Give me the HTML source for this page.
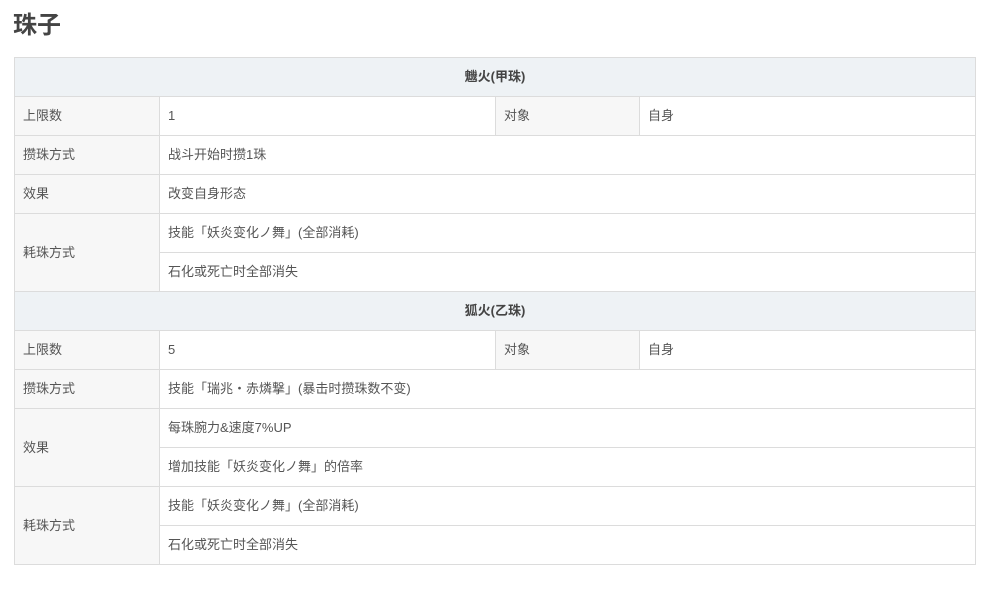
<!DOCTYPE html>
<html><head><meta charset="utf-8"><style>
body{margin:0;background:#fff;font-family:"Liberation Sans","Noto Sans CJK SC",sans-serif;color:#444;width:1000px;height:590px;overflow:hidden;position:relative}
h1{position:absolute;left:13px;top:9px;margin:0;font-size:24px;font-weight:bold;color:#444;line-height:34px}
.c{position:absolute;box-sizing:border-box;border:1px solid #dcdcdc;font-size:13px;line-height:37px;padding-left:8px;background:#fff;color:#555}
.l{background:#f7f7f7}
.h{background:#eef2f5;text-align:center;font-weight:bold;padding-left:0;color:#444}
</style></head><body>
<h1>珠子</h1>
<div class="c h" style="left:14px;top:57px;width:962px;height:40px">魕火(甲珠)</div>
<div class="c l" style="left:14px;top:96px;width:146px;height:40px">上限数</div>
<div class="c" style="left:159px;top:96px;width:337px;height:40px">1</div>
<div class="c l" style="left:495px;top:96px;width:145px;height:40px">对象</div>
<div class="c" style="left:639px;top:96px;width:337px;height:40px">自身</div>
<div class="c l" style="left:14px;top:135px;width:146px;height:40px">攒珠方式</div>
<div class="c" style="left:159px;top:135px;width:817px;height:40px">战斗开始时攒1珠</div>
<div class="c l" style="left:14px;top:174px;width:146px;height:40px">效果</div>
<div class="c" style="left:159px;top:174px;width:817px;height:40px">改变自身形态</div>
<div class="c l" style="left:14px;top:213px;width:146px;height:79px;line-height:77px">耗珠方式</div>
<div class="c" style="left:159px;top:213px;width:817px;height:40px">技能「妖炎变化ノ舞」(全部消耗)</div>
<div class="c" style="left:159px;top:252px;width:817px;height:40px">石化或死亡时全部消失</div>
<div class="c h" style="left:14px;top:291px;width:962px;height:40px">狐火(乙珠)</div>
<div class="c l" style="left:14px;top:330px;width:146px;height:40px">上限数</div>
<div class="c" style="left:159px;top:330px;width:337px;height:40px">5</div>
<div class="c l" style="left:495px;top:330px;width:145px;height:40px">对象</div>
<div class="c" style="left:639px;top:330px;width:337px;height:40px">自身</div>
<div class="c l" style="left:14px;top:369px;width:146px;height:40px">攒珠方式</div>
<div class="c" style="left:159px;top:369px;width:817px;height:40px">技能「瑞兆・赤燐撃」(暴击时攒珠数不变)</div>
<div class="c l" style="left:14px;top:408px;width:146px;height:79px;line-height:77px">效果</div>
<div class="c" style="left:159px;top:408px;width:817px;height:40px">每珠腕力&amp;速度7%UP</div>
<div class="c" style="left:159px;top:447px;width:817px;height:40px">增加技能「妖炎变化ノ舞」的倍率</div>
<div class="c l" style="left:14px;top:486px;width:146px;height:79px;line-height:77px">耗珠方式</div>
<div class="c" style="left:159px;top:486px;width:817px;height:40px">技能「妖炎变化ノ舞」(全部消耗)</div>
<div class="c" style="left:159px;top:525px;width:817px;height:40px">石化或死亡时全部消失</div>
</body></html>
